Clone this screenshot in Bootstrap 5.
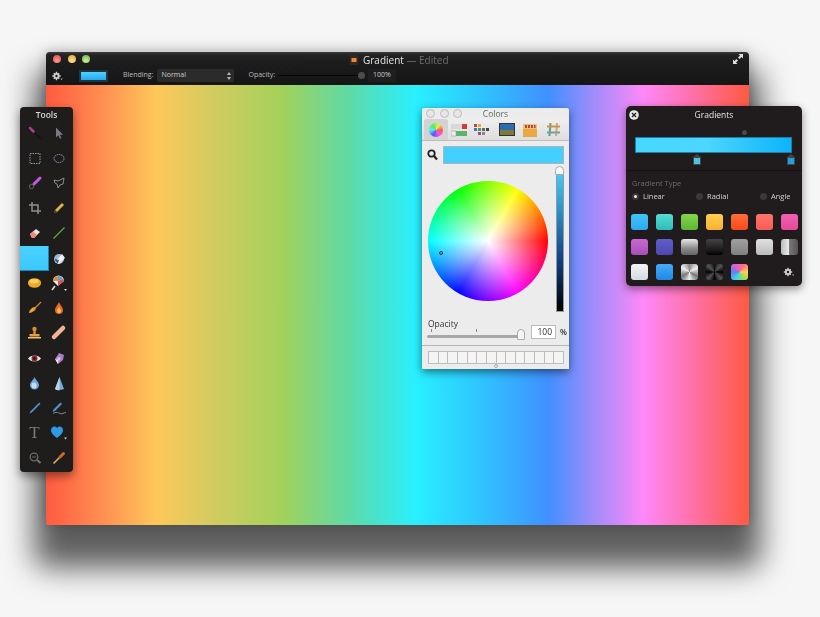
<!DOCTYPE html>
<html lang="en"><head><meta charset="utf-8"><title>Gradient</title>
<link href="https://cdn.jsdelivr.net/npm/bootstrap@5.3.0/dist/css/bootstrap.min.css" rel="stylesheet">
<style>
html,body{margin:0;height:617px;overflow:hidden;background:#f6f6f6;font-family:"Open Sans","DejaVu Sans",sans-serif}
.desk{position:relative;width:820px;height:617px;overflow:hidden}
.win{position:absolute;filter:blur(.35px)}
.mainshadow{position:absolute;left:46px;top:52px;width:703px;height:473px;border-radius:4px;box-shadow:0 31px 30px 12px rgba(0,0,0,.62),0 0 14px rgba(0,0,0,.25)}
.mainwin{left:46px;top:52px;width:703px;height:473px;border-radius:4px 4px 3px 3px;background:linear-gradient(90deg,#ff5a40 0,#ff8e52 8%,#ffc75a 15.6%,#d6cb60 23%,#a3d15a 33.6%,#5fdaa5 43%,#28f0ff 52.6%,#2fc4ff 62%,#4090ff 71.5%,#a08cfa 78%,#ff88f8 85%,#ff70a8 92%,#ff5a40 100%)}
.head{height:33px;background:linear-gradient(#3b3b3b 0,#222 3px,#1b1b1b 40%,#161616 100%);border-radius:4px 4px 0 0;color:#ddd;position:relative;z-index:1}
.titlerow{height:16px;padding:0 5px 2px 7px;position:relative}
.light{width:8px;height:8px;border-radius:50%;margin-right:6.5px}
.lr{background:radial-gradient(circle at 50% 70%,#ff9a94,#e0443e)}
.ly{background:radial-gradient(circle at 50% 70%,#ffe09a,#e09c2a)}
.lg{background:radial-gradient(circle at 50% 70%,#c8f0a0,#6cae3e)}
.doctitle{position:absolute;left:304px;top:1px;font-size:10px;line-height:14px;white-space:nowrap;color:#e4e4e4;display:flex;align-items:center;gap:5px}
.doctitle i{font-style:normal;color:#6f6f6f}
.toolrow{height:15px;padding-left:6px;font-size:7px;color:#bbb;white-space:nowrap}
.tinyswatch{width:29px;height:12px;background:#24343f;padding:2px;margin:0 15px 0 16px}
.tinyswatch span{display:block;height:100%;background:linear-gradient(#4fd0ff,#25aaf0)}
.selbox{width:77px;height:13px;margin:0 15px 0 3px;background:#2b2b2b;border-radius:2px;padding:0 3px 0 5px;color:#ccc}
.opslider{width:83px;height:1px;background:#050505;margin:0 0 0 3px;position:relative}
.opknob{position:absolute;right:-4px;top:-3px;width:7px;height:7px;border-radius:50%;background:#4c4c4c}
.oppct{background:#1f1f1f;margin-left:7px;padding:1px 5px;color:#ccc}
.toolspanel{left:20px;top:107px;width:53px;height:365px;border-radius:4px;background:#1f1c1c;box-shadow:0 4px 10px rgba(0,0,0,.45)}
.toolstitle{height:14px;font-size:8.5px;line-height:15px;text-align:center;color:#d8d8d8;font-weight:600}
.toolgrid{display:grid;grid-template-columns:29px 20px;grid-auto-rows:25px;align-items:center;justify-items:center;margin-top:-.5px}
.toolgrid svg{display:block;overflow:visible}
.selsw{width:29px;height:25px;background:linear-gradient(#4ad2ff,#3cc8ff);justify-self:start;border-bottom:1px solid #1b87b5;border-right:1px solid #1b87b5}
.toolT{font-family:"Liberation Serif",serif;font-size:17px;line-height:20px;color:#7c7c7c}
.colorspanel{left:422px;top:108px;width:147px;height:261px;background:#ececec;box-shadow:0 3px 9px rgba(0,0,0,.5);border-radius:2px 2px 0 0;color:#333}
.ctitle{height:11px;position:relative;font-size:8.5px;line-height:11px;text-align:center;color:#666}
.hole{width:9px;height:9px;border:1px solid #bbb;border-radius:50%;background:#e6e6e6;margin-right:4.5px}
.holes{position:absolute;left:4px;top:1px}
.ctools{height:22px;padding:0 0 0 2px;border-bottom:1px solid #bdbdbd;background:linear-gradient(#eee,#dedede)}
.ctool{width:23.6px;height:21px}
.ctool.on{background:#d3d3d3;border-radius:2px}
.csearch{padding:5px 5px 0 5px;gap:5px}
.cfield{width:121px;height:18px;background:#43d0ff;border:1px solid #b2b2b2}
.wheelrow{position:relative;height:152px}
.wheel{position:absolute;left:6px;top:17px;width:120px;height:120px;border-radius:50%;background:radial-gradient(closest-side,#fff 0,rgba(255,255,255,0) 100%),conic-gradient(from 90deg,#f00,#f0f,#00f,#0ff,#0f0,#ff0,#f00)}
.wmark{position:absolute;left:11px;top:70px;width:4px;height:4px;border:1px solid #222;border-radius:50%}
.vbar{position:absolute;left:134px;top:6px;width:7.5px;height:142px;border:1px solid #999;background:linear-gradient(#43d0ff,#148 62%,#000)}
.vknob{position:absolute;left:133px;top:2px;width:9px;height:9px;border-radius:50% 50% 1px 1px;background:#f8f8f8;border:1px solid #aaa}
.oplabel{font-size:8.5px;line-height:10px;padding-left:6px;margin-top:3px}
.oprow{padding-left:5px;position:relative;height:15px}
.ctrack{width:94px;height:3px;background:#a8a8a8;border-radius:2px;position:relative}
.ctick{position:absolute;top:-6px;width:1px;height:3px;background:#888}
.cthumb{position:absolute;right:-4px;top:-6px;width:8px;height:11px;background:#f6f6f6;border:1px solid #aaa;border-radius:4px 4px 1px 1px}
.pctbox{width:25px;height:14px;background:#fff;border:1px solid #bbb;font-size:8.5px;line-height:12px;text-align:right;padding-right:3px;margin-left:10px;margin-top:-9px}
.pctsign{font-size:8px;margin-left:4px;margin-top:-9px;font-weight:600}
.cdiv{border-top:1px solid #b6b6b6;margin-top:1px;padding:5px 5px 0 6px}
.palette{display:grid;grid-template-columns:repeat(14,1fr);gap:1px;height:13px;background:#bdbdbd;padding:1px;width:136px}
.palette span{background:#f4f4f4}
.cgrip{display:block;width:4px;height:4px;border:1px solid #aaa;border-radius:50%;margin:0 auto}
.gradpanel{left:626px;top:106px;width:176px;height:180px;border-radius:5px;background:#201c1d;box-shadow:0 3px 9px rgba(0,0,0,.45);color:#ddd}
.gtitle{height:18px;position:relative;font-size:8.5px;line-height:17px;text-align:center;color:#e4e4e4;font-weight:500}
.gclose{position:absolute;left:3px;top:4px;width:10px;height:10px}
.gedit{height:47px;position:relative;border-bottom:1px solid #141212}
.gbar{position:absolute;left:9px;top:13px;width:157px;height:16px;background:linear-gradient(90deg,#45d8ff,#4dd6ff 45%,#0cb4fa);border:1px solid #1a7ea6}
.gdot{position:absolute;left:115.500px;top:6px;width:5px;height:5px;border-radius:50%;background:#4a4a4a}
.ghandle{position:absolute;top:30px;width:8px;height:11px;background:#454545;clip-path:polygon(50% 0,100% 30%,100% 100%,0 100%,0 30%);padding:4px 1px 1px}
.ghandle span{display:block;width:100%;height:100%;background:#49c4e4}
.gsect{font-size:7.5px;color:#6d6a6a;padding:7px 0 0 6px;line-height:10px}
.gradios{font-size:7.5px;color:#d4d4d4;padding:0 0 0 6px;height:17px;font-weight:500}
.gradio{display:flex;align-items:center;gap:4px;width:64px;flex:none}
.gdotr{width:7px;height:7px;border-radius:50%;background:#3b3838;display:flex;align-items:center;justify-content:center}
.gdotr.on::after{content:"";width:3px;height:3px;border-radius:50%;background:#eee}
.swgrid{display:grid;grid-template-columns:repeat(7,25px);grid-auto-rows:25px;padding:4.500px 0 0 5px;justify-items:start;align-items:center}
.sw{width:16.500px;height:16.500px;border-radius:3px}
.gmenu{margin-left:2px}
</style></head>
<body>
<div class="desk">
<div class="mainshadow"></div>
<div class="win mainwin">
  <div class="head d-flex flex-column">
    <div class="titlerow d-flex align-items-center">
      <span class="light lr"></span><span class="light ly"></span><span class="light lg"></span>
      <div class="doctitle"><svg width="8" height="10" viewBox="0 0 8 10"><rect width="8" height="10" rx="1" fill="#33291f"/><rect x="1.500" y="3" width="5" height="4" fill="#e8893a"/></svg><span>Gradient <i>— Edited</i></span></div>
      <svg class="ms-auto" width="12" height="12" viewBox="0 0 12 12" fill="#ddd"><path d="M11 1v4.500L9.500 4 7.500 6 6 4.500 8 2.500 6.500 1zM1 11V6.500L2.500 8l2-2L6 7.500 4 9.500 5.500 11z"/></svg>
    </div>
    <div class="toolrow d-flex align-items-center">
      <svg width="11" height="10" viewBox="0 0 11 10"><g fill="#cfcfcf"><circle cx="4.500" cy="5" r="3"/><path d="M3.800 .8h1.400v8.400H3.800zM.3 4.300h8.400v1.400H.3zM1.300 2.700l1-1 5.400 5.600-1 1zM6.700 1.700l1 1-5.400 5.600-1-1z"/></g><circle cx="4.500" cy="5" r="1.200" fill="#222"/><path d="M8.500 7.500h2.200L9.600 9z" fill="#bbb"/></svg>
      <div class="tinyswatch"><span></span></div>
      <span>Blending:</span>
      <div class="selbox d-flex align-items-center justify-content-between"><span>Normal</span><svg width="4" height="8" viewBox="0 0 4 8" fill="#bbb"><path d="M2 0l2 3H0zM2 8L0 5h4z"/></svg></div>
      <span>Opacity:</span>
      <div class="opslider"><span class="opknob"></span></div>
      <span class="oppct">100%</span>
    </div>
  </div>
</div>

<div class="win toolspanel">
  <div class="toolstitle">Tools</div>
  <div class="toolgrid">
    <svg width="14" height="14" viewBox="0 0 14 14"><path d="M5 5l8 8" stroke="#111" stroke-width="1.500"/><path d="M2 2l3.500 3.500" stroke="#b03a9c" stroke-width="2.500" stroke-linecap="round"/></svg>
    <svg width="14" height="14" viewBox="0 0 14 14"><path d="M4 1.500v10l2.300-2.200 1.700 3.500 1.500-.7-1.700-3.400H11z" fill="#7a7a80"/></svg>

    <svg width="14" height="14" viewBox="0 0 14 14"><rect x="2" y="2.500" width="10" height="10" fill="none" stroke="#8aa0b5" stroke-dasharray="1.500 1"/></svg>
    <svg width="14" height="14" viewBox="0 0 14 14"><ellipse cx="7" cy="7.500" rx="5" ry="4" fill="none" stroke="#8aa0b5" stroke-dasharray="1.500 .8"/></svg>

    <svg width="14" height="14" viewBox="0 0 14 14"><path d="M6 8l6-6" stroke="#c45ae0" stroke-width="3" stroke-linecap="round"/><circle cx="3.500" cy="10.500" r="2.200" fill="none" stroke="#666"/></svg>
    <svg width="14" height="14" viewBox="0 0 14 14"><path d="M2 4l4 1 6-3-1 6-3 1-2 3-1-4-2-1z" fill="none" stroke="#8c8c8c"/></svg>

    <svg width="14" height="14" viewBox="0 0 14 14"><path d="M4 1v9h9M1 4h9v9" fill="none" stroke="#8f8f8f" stroke-width="1.500"/></svg>
    <svg width="14" height="14" viewBox="0 0 14 14"><path d="M2 12l1-3 7-7 2 2-7 7z" fill="#e0b040"/><path d="M2 12l1-3 2 2z" fill="#333"/></svg>

    <svg width="14" height="14" viewBox="0 0 14 14"><path d="M2 8l6-5 4 3-6 6H4z" fill="#e8e4e0"/><path d="M2 8l3-2.500 4 3.500-3 3H4z" fill="#ef8a78"/></svg>
    <svg width="14" height="14" viewBox="0 0 14 14"><path d="M1.500 12.500L12.500 1.500" stroke="#62a63a" stroke-width="1.300"/></svg>

    <div class="selsw"></div>
    <svg width="15" height="15" viewBox="0 0 15 15"><circle cx="7" cy="8" r="5" fill="#9fb6d6"/><path d="M3 11l7-8 3 4-6 6z" fill="#f0f0f0"/><path d="M3 8a4 4 0 0 0 3 4l1-3z" fill="#2b5d9c"/></svg>

    <svg width="15" height="12" viewBox="0 0 17 13"><ellipse cx="8.500" cy="6.500" rx="7.500" ry="5.500" fill="#f0a828"/><ellipse cx="8" cy="4.500" rx="5" ry="2.500" fill="#fbd060"/></svg>
    <svg width="20" height="20" viewBox="0 0 20 20"><path d="M6 13L3 17" stroke="#ddd" stroke-width="1.500"/><path d="M4 8a5.500 5.500 0 0 1 11 0l-6 5z" fill="#eee"/><path d="M4 8a5.500 5.500 0 0 1 5-5v5z" fill="#e58a38"/><path d="M9 3a5.500 5.500 0 0 1 5 3l-5 2z" fill="#5aa0d0"/><path d="M9 8l5-2 1 2-6 5z" fill="#d85050"/><path d="M15 16h3l-1.500 2z" fill="#ddd"/></svg>

    <svg width="14" height="14" viewBox="0 0 14 14"><path d="M7 7l6-6" stroke="#c98a3a" stroke-width="1.300"/><path d="M1 12c.5-3 3-6 6-6 1 1 1 3-1 4s-3 2-5 2z" fill="#f0a030"/></svg>
    <svg width="14" height="14" viewBox="0 0 14 14"><path d="M7 1c1 3 4 5 4 8a4 4 0 0 1-8 0c0-3 3-5 4-8z" fill="#e86a20"/><path d="M7 6c.5 1.500 2 2.500 2 4a2 2 0 0 1-4 0c0-1.500 1.500-2.500 2-4z" fill="#fcc060"/></svg>

    <svg width="15" height="14" viewBox="0 0 15 14"><circle cx="7.500" cy="3" r="2.200" fill="#d89038"/><rect x="6.300" y="4" width="2.400" height="4" fill="#d89038"/><rect x="2.500" y="8" width="10" height="2.500" fill="#e2a040"/><rect x="1" y="11" width="13" height="1.500" fill="#f0c070"/></svg>
    <svg width="15" height="15" viewBox="0 0 15 15"><path d="M2 11L11 2" stroke="#f0b492" stroke-width="4.500" stroke-linecap="round"/></svg>

    <svg width="15" height="11" viewBox="0 0 15 11"><path d="M1 5.500C4 1.500 11 1.500 14 5.500 11 9.500 4 9.500 1 5.500z" fill="#e8e8e8"/><circle cx="7.500" cy="5.500" r="3" fill="#8a2c2c"/><circle cx="7.500" cy="5.500" r="1.200" fill="#111"/></svg>
    <svg width="14" height="14" viewBox="0 0 14 14"><path d="M3 8l4-6 5 2-1 5-5 4z" fill="#a87ec0"/><path d="M3 8l3.500 1.500L6 13z" fill="#eee"/><path d="M6 6l3 1-2 3-2-1z" fill="#d8c4e8"/></svg>

    <svg width="13" height="14" viewBox="0 0 13 14"><path d="M6.500 1c1 3 4.500 5 4.500 8a4.500 4.500 0 0 1-9 0c0-3 3.500-5 4.500-8z" fill="#6fa8dc"/><ellipse cx="6" cy="9.500" rx="2.500" ry="3" fill="#c4def5"/></svg>
    <svg width="13" height="15" viewBox="0 0 13 15"><path d="M6.500 1l4.500 12a6 2 0 0 1-9 0z" fill="#7aa8d8"/><path d="M6.500 1v13.500a6 2 0 0 1-4.500-1.500z" fill="#b8d4f0"/></svg>

    <svg width="14" height="14" viewBox="0 0 14 14"><path d="M1.500 12.500l2-.8 9-9-1.200-1.200-9 9z" fill="#4a94d0"/></svg>
    <svg width="17" height="14" viewBox="0 0 17 14"><path d="M1.500 11l1-2.500 7-7 1.500 1.500-7 7z" fill="#4a94d0"/><path d="M2 12.500c3-2 5-1 7 0s4-1 6-1" fill="none" stroke="#8a8a8a"/></svg>

    <div class="toolT">T</div>
    <svg width="20" height="18" viewBox="0 0 20 18"><path d="M7.500 14C3 10.500 1.500 8.500 1.500 6a3.300 3.300 0 0 1 6-2 3.300 3.300 0 0 1 6 2c0 2.500-1.500 4.500-6 8z" fill="#2e9ae6" transform="translate(.5 0)"/><path d="M15 13.500h3L16.500 15.500z" fill="#ccc"/></svg>

    <svg width="14" height="14" viewBox="0 0 14 14"><circle cx="6" cy="6" r="3.800" fill="none" stroke="#6a6a6a" stroke-width="1.300"/><path d="M9 9l3.500 3" stroke="#777" stroke-width="2"/><path d="M4 6h4" stroke="#666"/></svg>
    <svg width="14" height="14" viewBox="0 0 14 14"><path d="M1.500 12.500L8 6" stroke="#e0b060" stroke-width="1.600"/><path d="M8 6l3.500-3.500" stroke="#c8682a" stroke-width="3" stroke-linecap="round"/></svg>
  </div>
</div>

<div class="win colorspanel">
  <div class="ctitle">
    <div class="holes d-flex"><span class="hole"></span><span class="hole"></span><span class="hole"></span></div>
    Colors
  </div>
  <div class="ctools d-flex align-items-center">
    <div class="ctool on d-flex align-items-center justify-content-center"><span class="d-block rounded-circle" style="width:14px;height:14px;background:conic-gradient(from 90deg,#f55,#e5e,#55f,#5ee,#5e5,#ee5,#f55)"></span></div>
    <div class="ctool d-flex align-items-center justify-content-center"><svg width="17" height="14" viewBox="0 0 17 14"><rect x="0" y="1" width="11" height="5" fill="#d8d8d8"/><rect x="11" y="1" width="5" height="5" fill="#d63a3a"/><rect x="5" y="8" width="11" height="5" fill="#58b868"/><rect x="0" y="8" width="5" height="5" fill="#eee" stroke="#999" stroke-width=".6"/></svg></div>
    <div class="ctool d-flex align-items-center justify-content-center"><svg width="17" height="14" viewBox="0 0 17 14"><rect x="0" y="1" width="3" height="3" fill="#d04040"/><rect x="4" y="1" width="3" height="3" fill="#e0b030"/><rect x="0" y="5" width="3" height="3" fill="#3080c0"/><rect x="4" y="5" width="3" height="3" fill="#40a050"/><rect x="8" y="5" width="3" height="3" fill="#666"/><rect x="12" y="5" width="3" height="3" fill="#444"/><rect x="4" y="9" width="3" height="3" fill="#b04090"/><rect x="8" y="9" width="3" height="3" fill="#888"/></svg></div>
    <div class="ctool d-flex align-items-center justify-content-center"><svg width="16" height="13" viewBox="0 0 16 13"><rect width="16" height="13" fill="#333"/><rect x="1" y="1" width="14" height="6" fill="#2d6cb0"/><rect x="1" y="7" width="14" height="5" fill="#7a7a3a"/></svg></div>
    <div class="ctool d-flex align-items-center justify-content-center"><svg width="14" height="14" viewBox="0 0 14 14"><rect y="6" width="14" height="8" fill="#e8a848"/><rect x="0" y="1" width="14" height="5" fill="#f0c070"/><path d="M2 2h2v3H2zM5 2h2v3H5zM8 2h2v3H8zM11 2h1.500v3H11z" fill="#b04848"/></svg></div>
    <div class="ctool d-flex align-items-center justify-content-center"><svg width="15" height="15" viewBox="0 0 15 15" fill="none" stroke-width="2"><path d="M4.500 1l-1 13" stroke="#58a868"/><path d="M11 1l-1 13" stroke="#d8b048"/><path d="M1 4.500h13" stroke="#c89060"/><path d="M1 10.500h13" stroke="#7898b8"/></svg></div>
  </div>
  <div class="csearch d-flex align-items-center">
    <svg width="11" height="12" viewBox="0 0 11 12" class="flex-shrink-0"><circle cx="4.500" cy="4.500" r="3.200" fill="none" stroke="#222" stroke-width="1.800"/><path d="M7 7l3 3.500" stroke="#222" stroke-width="2.200"/></svg>
    <div class="cfield"></div>
  </div>
  <div class="wheelrow">
    <div class="wheel"><span class="wmark d-block"></span></div>
    <div class="vbar"></div><div class="vknob"></div>
  </div>
  <div class="oplabel">Opacity</div>
  <div class="oprow d-flex align-items-center">
    <div class="ctrack"><span class="ctick" style="left:4px"></span><span class="ctick" style="left:49px"></span><span class="cthumb"></span></div>
    <div class="pctbox">100</div><span class="pctsign">%</span>
  </div>
  <div class="cdiv">
    <div class="palette"><span></span><span></span><span></span><span></span><span></span><span></span><span></span><span></span><span></span><span></span><span></span><span></span><span></span><span></span></div>
    <span class="cgrip"></span>
  </div>
</div>

<div class="win gradpanel">
  <div class="gtitle">
    <svg class="gclose" viewBox="0 0 10 10"><circle cx="5" cy="5" r="4.800" fill="#e8e8e8"/><path d="M3 3l4 4M7 3l-4 4" stroke="#222" stroke-width="1.300"/></svg>
    Gradients
  </div>
  <div class="gedit">
    <div class="gbar"></div>
    <span class="gdot"></span>
    <div class="ghandle" style="left:67px"><span></span></div>
    <div class="ghandle" style="left:161px"><span style="background:#1f9fe0"></span></div>
  </div>
  <div class="gsect">Gradient Type</div>
  <div class="gradios d-flex align-items-center">
    <div class="gradio"><span class="gdotr on"></span>Linear</div>
    <div class="gradio"><span class="gdotr"></span>Radial</div>
    <div class="gradio"><span class="gdotr"></span>Angle</div>
  </div>
  <div class="swgrid">
    <span class="sw" style="background:linear-gradient(#3fc4f8,#2ea8f0)"></span>
    <span class="sw" style="background:linear-gradient(#55dcd4,#2fbcb8)"></span>
    <span class="sw" style="background:linear-gradient(#86d44e,#5cb832)"></span>
    <span class="sw" style="background:linear-gradient(#ffd050,#fbb030)"></span>
    <span class="sw" style="background:linear-gradient(#ff6e38,#f8481c)"></span>
    <span class="sw" style="background:linear-gradient(#ff7468,#f85c58)"></span>
    <span class="sw" style="background:linear-gradient(#f060b0,#e84898)"></span>
    <span class="sw" style="background:linear-gradient(#c868d0,#a850b8)"></span>
    <span class="sw" style="background:linear-gradient(#6060c8,#4c48b0)"></span>
    <span class="sw" style="background:linear-gradient(#e8e8e8,#888 60%,#666)"></span>
    <span class="sw" style="background:linear-gradient(#444,#1a1a1a 70%,#000)"></span>
    <span class="sw" style="background:linear-gradient(#a0a0a0,#808080)"></span>
    <span class="sw" style="background:linear-gradient(#e0e0e0,#bcbcbc)"></span>
    <span class="sw" style="background:linear-gradient(90deg,#bbb 0,#eee 50%,#777 50%,#555)"></span>
    <span class="sw" style="background:linear-gradient(#f4f4f4,#d4d8e0)"></span>
    <span class="sw" style="background:linear-gradient(#48aaf8,#1e88e8)"></span>
    <span class="sw" style="background:conic-gradient(#888,#eee,#777,#eee,#777,#eee,#888)"></span>
    <span class="sw" style="background:conic-gradient(#111,#555,#000,#555,#000,#555,#000,#555,#111)"></span>
    <span class="sw" style="background:conic-gradient(from 30deg,#ff6a8a,#ffd050,#90e060,#40d0f0,#6080f0,#e060d0,#ff6a8a)"></span>
    <span></span>
    <svg class="gmenu" width="12" height="10" viewBox="0 0 11 10"><g fill="#cfcfcf"><circle cx="4.500" cy="5" r="3"/><path d="M3.800 .8h1.400v8.400H3.800zM.3 4.300h8.400v1.400H.3zM1.300 2.700l1-1 5.400 5.600-1 1zM6.700 1.700l1 1-5.400 5.600-1-1z"/></g><circle cx="4.500" cy="5" r="1.200" fill="#222"/><path d="M8.500 7.500h2.200L9.600 9z" fill="#bbb"/></svg>
  </div>
</div>

</div>
<script src="https://cdn.jsdelivr.net/npm/bootstrap@5.3.0/dist/js/bootstrap.bundle.min.js"></script>
</body></html>
